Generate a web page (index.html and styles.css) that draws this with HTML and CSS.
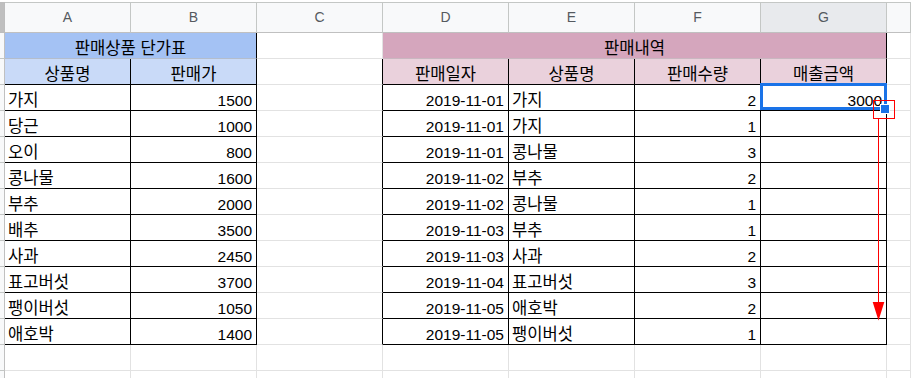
FILE: index.html
```html
<!DOCTYPE html>
<html lang="ko">
<head>
<meta charset="utf-8">
<title>판매내역</title>
<link rel="stylesheet" href="styles.css">
</head>
<body>
<div class="sheet">
  <div class="grid">
    <!-- column headers -->
    <div class="corner"></div>
    <div class="ch">A</div><div class="ch">B</div><div class="ch">C</div><div class="ch">D</div><div class="ch">E</div><div class="ch">F</div><div class="ch sel">G</div><div class="ch"></div>

    <!-- row 1 -->
    <div class="rh"></div>
    <div class="c k ctr span2 fill-b1 bR">판매상품 단가표</div>
    <div class="c"></div>
    <div class="c k ctr span4 fill-m1 bR">판매내역</div>
    <div class="c"></div>

    <!-- row 2 -->
    <div class="rh"></div>
    <div class="c k ctr fill-b2 bR bB">상품명</div>
    <div class="c k ctr fill-b2 bR bB">판매가</div>
    <div class="c bR"></div>
    <div class="c k ctr fill-m2 bR bB">판매일자</div>
    <div class="c k ctr fill-m2 bR bB">상품명</div>
    <div class="c k ctr fill-m2 bR bB">판매수량</div>
    <div class="c k ctr fill-m2 bR bB">매출금액</div>
    <div class="c"></div>

    <!-- row 3 -->
    <div class="rh"></div>
    <div class="c k bR bB">가지</div><div class="c r bR bB">1500</div><div class="c bR"></div>
    <div class="c r bR bB">2019-11-01</div><div class="c k bR bB">가지</div><div class="c r bR bB">2</div><div class="c r bR bB">3000</div>
    <div class="c"></div>

    <!-- row 4 -->
    <div class="rh"></div>
    <div class="c k bR bB">당근</div><div class="c r bR bB">1000</div><div class="c bR"></div>
    <div class="c r bR bB">2019-11-01</div><div class="c k bR bB">가지</div><div class="c r bR bB">1</div><div class="c r bR bB"></div>
    <div class="c"></div>

    <!-- row 5 -->
    <div class="rh"></div>
    <div class="c k bR bB">오이</div><div class="c r bR bB">800</div><div class="c bR"></div>
    <div class="c r bR bB">2019-11-01</div><div class="c k bR bB">콩나물</div><div class="c r bR bB">3</div><div class="c r bR bB"></div>
    <div class="c"></div>

    <!-- row 6 -->
    <div class="rh"></div>
    <div class="c k bR bB">콩나물</div><div class="c r bR bB">1600</div><div class="c bR"></div>
    <div class="c r bR bB">2019-11-02</div><div class="c k bR bB">부추</div><div class="c r bR bB">2</div><div class="c r bR bB"></div>
    <div class="c"></div>

    <!-- row 7 -->
    <div class="rh"></div>
    <div class="c k bR bB">부추</div><div class="c r bR bB">2000</div><div class="c bR"></div>
    <div class="c r bR bB">2019-11-02</div><div class="c k bR bB">콩나물</div><div class="c r bR bB">1</div><div class="c r bR bB"></div>
    <div class="c"></div>

    <!-- row 8 -->
    <div class="rh"></div>
    <div class="c k bR bB">배추</div><div class="c r bR bB">3500</div><div class="c bR"></div>
    <div class="c r bR bB">2019-11-03</div><div class="c k bR bB">부추</div><div class="c r bR bB">1</div><div class="c r bR bB"></div>
    <div class="c"></div>

    <!-- row 9 -->
    <div class="rh"></div>
    <div class="c k bR bB">사과</div><div class="c r bR bB">2450</div><div class="c bR"></div>
    <div class="c r bR bB">2019-11-03</div><div class="c k bR bB">사과</div><div class="c r bR bB">2</div><div class="c r bR bB"></div>
    <div class="c"></div>

    <!-- row 10 -->
    <div class="rh"></div>
    <div class="c k bR bB">표고버섯</div><div class="c r bR bB">3700</div><div class="c bR"></div>
    <div class="c r bR bB">2019-11-04</div><div class="c k bR bB">표고버섯</div><div class="c r bR bB">3</div><div class="c r bR bB"></div>
    <div class="c"></div>

    <!-- row 11 -->
    <div class="rh"></div>
    <div class="c k bR bB">팽이버섯</div><div class="c r bR bB">1050</div><div class="c bR"></div>
    <div class="c r bR bB">2019-11-05</div><div class="c k bR bB">애호박</div><div class="c r bR bB">2</div><div class="c r bR bB"></div>
    <div class="c"></div>

    <!-- row 12 -->
    <div class="rh"></div>
    <div class="c k bR bB">애호박</div><div class="c r bR bB">1400</div><div class="c bR"></div>
    <div class="c r bR bB">2019-11-05</div><div class="c k bR bB">팽이버섯</div><div class="c r bR bB">1</div><div class="c r bR bB"></div>
    <div class="c"></div>

    <!-- row 13 -->
    <div class="rh"></div>
    <div class="c"></div><div class="c"></div><div class="c"></div><div class="c"></div><div class="c"></div><div class="c"></div><div class="c"></div><div class="c"></div>

    <!-- row 14 -->
    <div class="rh"></div>
    <div class="c"></div><div class="c"></div><div class="c"></div><div class="c"></div><div class="c"></div><div class="c"></div><div class="c"></div><div class="c"></div>
  </div>

  <!-- overlays: selection, fill handle, annotation -->
  <div class="selection"></div>
  <div class="handle"></div>
  <div class="mark"></div>
  <svg class="arrow" width="30" height="210" viewBox="865 115 30 210" xmlns="http://www.w3.org/2000/svg">
    <line x1="878.5" y1="119" x2="878.5" y2="305" stroke="#ff0000" stroke-width="1"/>
    <polygon points="872.7,302 884.3,302 878.5,320.5" fill="#ff0000"/>
  </svg>
</div>
</body>
</html>
```

FILE: styles.css
```css
html, body {
  margin: 0;
  padding: 0;
  background: #ffffff;
  overflow: hidden;
}

.sheet {
  position: relative;
  width: 911px;
  height: 378px;
  overflow: hidden;
  padding-top: 2px;
  box-sizing: border-box;
  font-family: "Liberation Sans", Arial, "Noto Sans CJK KR", sans-serif;
  color: #000000;
}

.grid {
  display: grid;
  grid-template-columns: 5px repeat(7, 126px) 1fr;
  grid-template-rows: 31px repeat(14, 26px);
}

.corner {
  background: #bfbfbf;
  border-top: 1px solid #bdbdbd;
  border-bottom: 1px solid #bdbdbd;
  border-right: 1px solid #bdbdbd;
  box-sizing: border-box;
}

.ch {
  box-sizing: border-box;
  background: #f8f9fa;
  border-top: 1px solid #c4c7c5;
  border-bottom: 1px solid #c0c0c0;
  border-right: 1px solid #c4c7c5;
  display: flex;
  align-items: center;
  justify-content: center;
  font-size: 14px;
  color: #555a5f;
  line-height: 29px;
}

.ch.sel {
  background: #e8eaed;
}

.rh {
  box-sizing: border-box;
  background: #f8f9fa;
  border-right: 1px solid #c0c0c0;
  border-bottom: 1px solid #c4c7c5;
}

.c {
  box-sizing: border-box;
  border-right: 1px solid #e2e2e2;
  border-bottom: 1px solid #e2e2e2;
  display: flex;
  align-items: flex-end;
  justify-content: flex-start;
  padding: 0 3px;
  font-size: 15.5px;
  line-height: 18px;
  white-space: nowrap;
  overflow: hidden;
}

.c.k {
  font-size: 16.6px;
}

.c.r {
  justify-content: flex-end;
  padding-right: 4px;
}

.c.ctr {
  justify-content: center;
}

.span2 { grid-column: span 2; }
.span4 { grid-column: span 4; }

.bR { border-right-color: #000000; }
.bB { border-bottom-color: #000000; }

.fill-b1 { background: #a4c2f4; border-bottom-color: #b4bdcc; }
.fill-b2 { background: #c9daf8; }
.fill-m1 { background: #d5a6bd; border-bottom-color: #c9b7c0; }
.fill-m2 { background: #ead1dc; }

.selection {
  position: absolute;
  left: 760px;
  top: 83px;
  width: 127px;
  height: 27px;
  box-sizing: border-box;
  border: 3px solid #1a73e8;
}

.handle {
  position: absolute;
  left: 880px;
  top: 104px;
  width: 8px;
  height: 8px;
  background: #1a73e8;
  border: 1px solid #ffffff;
}

.mark {
  position: absolute;
  left: 873px;
  top: 100px;
  width: 22px;
  height: 19px;
  box-sizing: border-box;
  border: 1px solid #ff0000;
}

.arrow {
  position: absolute;
  left: 865px;
  top: 115px;
}
```
